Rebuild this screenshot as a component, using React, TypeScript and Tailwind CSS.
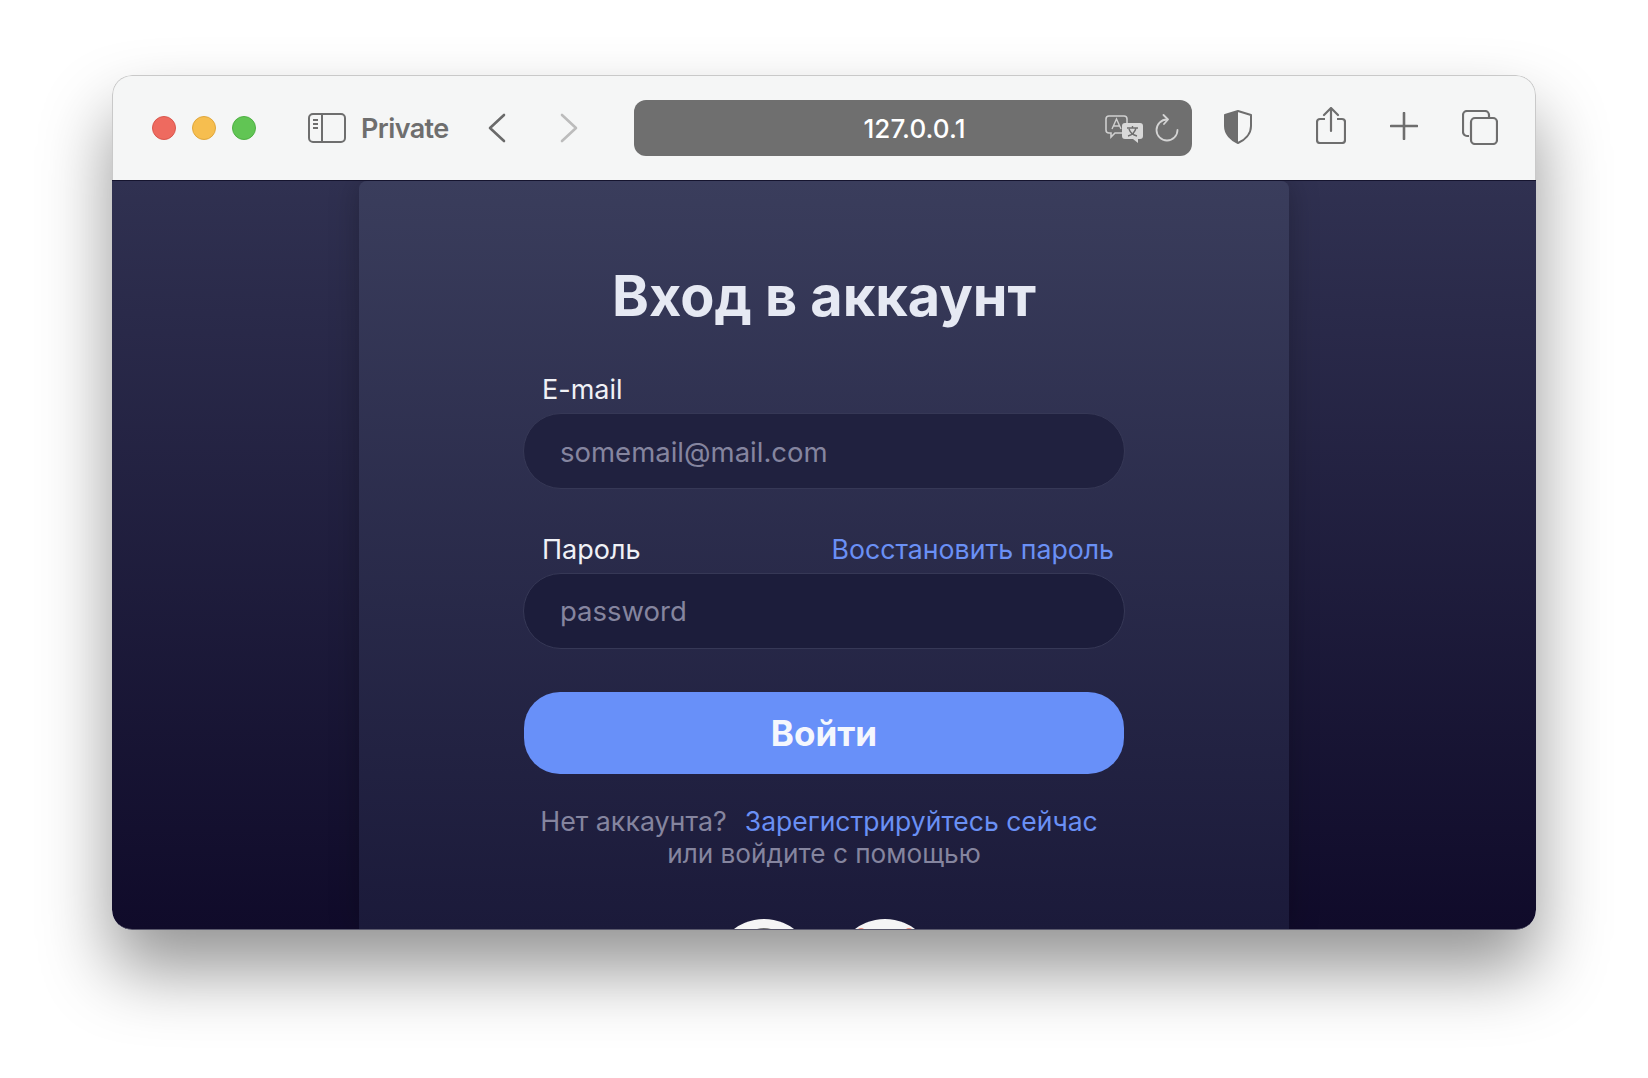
import React from 'react';

const font = "font-['Inter','Noto_Sans',sans-serif]";

const Icon = ({ className, children, vb }: { className: string; children: React.ReactNode; vb: string }) => (
  <svg className={className} viewBox={vb} fill="none">
    {children}
  </svg>
);

const TitleBar = () => (
  <div className="flex items-center h-[105px] bg-[#f5f6f6] pl-[39px] shrink-0 border-t border-x border-[#c9c9c9] rounded-t-[20px]">
    <div className="flex gap-4">
      <div className="w-6 h-6 rounded-full bg-[#ee6a5f] border border-[#d9574d]" />
      <div className="w-6 h-6 rounded-full bg-[#f6be4f] border border-[#e0a73c]" />
      <div className="w-6 h-6 rounded-full bg-[#61c554] border border-[#4fb044]" />
    </div>
    <Icon className="ml-[52px] w-[38px] h-[30px]" vb="0 0 38 30">
      <rect x="1" y="1" width="36" height="28" rx="4" stroke="#6e6e6e" strokeWidth="2" />
      <path d="M14 1v28" stroke="#6e6e6e" strokeWidth="2" />
      <path d="M5 7h5M5 11h5M5 15h5" stroke="#6e6e6e" strokeWidth="2" />
    </Icon>
    <span className="ml-[15px] w-[90px] text-[27px] font-semibold leading-none text-[#6e6e6e] font-['Inter',sans-serif] tracking-[-0.6px]">Private</span>
    <Icon className="ml-[37px] w-[18px] h-[30px]" vb="0 0 18 30">
      <path d="M16 2 2 15l14 13" stroke="#6a6a6a" strokeWidth="2.6" strokeLinecap="round" strokeLinejoin="round" />
    </Icon>
    <Icon className="ml-[54px] w-[18px] h-[30px]" vb="0 0 18 30">
      <path d="M2 2l14 13L2 28" stroke="#bcbcbc" strokeWidth="2.6" strokeLinecap="round" strokeLinejoin="round" />
    </Icon>
    <div className="relative ml-[56px] w-[558px] h-[56px] rounded-[12px] bg-[#6f6f6f] flex items-center justify-center">
      <span className="ml-[3px] text-[26px] font-medium text-white font-['Inter',sans-serif] tracking-[0.1px]">127.0.0.1</span>
      <Icon className="absolute left-[471px] top-[15px] w-[38px] h-[28px]" vb="0 0 38 28">
        <path d="M4 1h15a3 3 0 0 1 3 3v11a3 3 0 0 1-3 3H10l-4 4v-4H4a3 3 0 0 1-3-3V4a3 3 0 0 1 3-3Z" stroke="#cfcfcf" strokeWidth="1.6" />
        <path d="M7 14l4.500-10L16 14M8.500 11h6" stroke="#cfcfcf" strokeWidth="1.4" />
        <path d="M20 8h15a3 3 0 0 1 3 3v10a3 3 0 0 1-3 3h-2v4l-5-4h-8a3 3 0 0 1-3-3V11a3 3 0 0 1 3-3Z" fill="#d8d8d8" />
        <path d="M22 13h11M27.500 11v2M31 13c-1 4-4 7-8 8M24 14c1 3 4 6 8 7" stroke="#6f6f6f" strokeWidth="1.400" />
      </Icon>
      <Icon className="absolute left-[521px] top-[14px] w-[24px] h-[28px]" vb="0 0 24 28">
        <path d="M12 5.500a10.500 10.500 0 1 0 10.500 10.500" stroke="#d4d4d4" strokeWidth="1.800" strokeLinecap="round" />
        <path d="M8.500 1 13 5.500 9 10" stroke="#d4d4d4" strokeWidth="1.800" strokeLinecap="round" strokeLinejoin="round" />
      </Icon>
    </div>
    <Icon className="ml-[32px] w-[28px] h-[34px] -translate-y-px" vb="0 0 28 34">
      <path d="M14 1 1 5v11c0 8 6 14 13 17 7-3 13-9 13-17V5Z" stroke="#6e6e6e" strokeWidth="2" strokeLinejoin="round" />
      <path d="M14 1 1 5v11c0 8 6 14 13 17Z" fill="#6e6e6e" />
    </Icon>
    <Icon className="ml-[64px] w-[30px] h-[37px] -translate-y-[3px]" vb="0 0 30 37">
      <path d="M9 12H4a3 3 0 0 0-3 3v18a3 3 0 0 0 3 3h22a3 3 0 0 0 3-3V15a3 3 0 0 0-3-3h-5" stroke="#6e6e6e" strokeWidth="2.200" />
      <path d="M15 24V2M8 8l7-7 7 7" stroke="#6e6e6e" strokeWidth="2.200" strokeLinecap="round" strokeLinejoin="round" />
    </Icon>
    <Icon className="ml-[44px] w-[28px] h-[28px] -translate-y-[2px]" vb="0 0 28 28">
      <path d="M14 1v26M1 14h26" stroke="#6e6e6e" strokeWidth="2.600" strokeLinecap="round" />
    </Icon>
    <Icon className="ml-[44px] w-[36px] h-[35px] -translate-y-px" vb="0 0 36 35">
      <path d="M7 26H5a4 4 0 0 1-4-4V5a4 4 0 0 1 4-4h18a4 4 0 0 1 4 4v3" stroke="#6e6e6e" strokeWidth="2.200" />
      <rect x="9" y="8" width="26" height="26" rx="4" stroke="#6e6e6e" strokeWidth="2.200" />
    </Icon>
  </div>
);

const Field = ({ label, placeholder, link, box }: { label: string; placeholder: string; link?: string; box: string }) => (
  <div className="w-[602px] shrink-0">
    <div className="flex justify-between items-baseline pl-[19px] pr-[11px] text-[27px] leading-[32px]">
      <span className="text-[#f0f1f6]">{label}</span>
      {link && <a className="text-[26.7px] text-[#6a90f5]">{link}</a>}
    </div>
    <div className={`rounded-[38px] flex items-center pl-[36px] text-[27.5px] text-[#85859f] border border-[#363856] ${box}`}>
      {placeholder}
    </div>
  </div>
);

export default function App() {
  return (
    <div className={`w-[1648px] h-[1078px] overflow-hidden bg-white pl-[112px] pt-[75px] ${font}`}>
      <div className="w-[1424px] h-[855px] rounded-[20px] overflow-hidden flex flex-col shadow-[0_40px_70px_rgba(0,0,0,0.42)]">
        <TitleBar />
        <div className="flex-1 min-h-0 flex justify-center overflow-hidden border-t border-[#15142e] border-b border-b-[#5a596c] rounded-b-[20px] bg-gradient-to-b from-[#303151] to-[#100b2a]">
          <div className="w-[930px] flex flex-col items-center bg-gradient-to-b from-[#3a3d5c] to-[#1b1a3a] rounded-t-[8px] shadow-[0_0_30px_rgba(0,0,0,0.25)]">
            <h1 className="shrink-0 mt-[79px] text-[55.8px] leading-[72px] font-bold text-[#e6e9f3]">Вход в аккаунт</h1>
            <div className="shrink-0 mt-[42px]">
              <Field label="E-mail" placeholder="somemail@mail.com" box="mt-[7px] h-[76px] pt-[4px] bg-[#20213f]" />
            </div>
            <div className="shrink-0 mt-[44px]">
              <Field label="Пароль" placeholder="password" link="Восстановить пароль" box="mt-[7px] h-[76px] pt-[2px] bg-[#1c1d3b]" />
            </div>
            <button className="shrink-0 mt-[43px] w-[600px] h-[82px] rounded-[36px] bg-[#6890f9] text-[35px] font-bold text-[#f5f7fd]">Войти</button>
            <p className="shrink-0 mt-[31px] text-[26.8px] leading-[32px] text-center text-[#85859f]">
              Нет аккаунта?&nbsp; <a className="ml-[3px] pr-[10px] text-[26.5px] text-[#6a90f5]">Зарегистрируйтесь сейчас</a>
              <br />
              <span className="text-[26.2px]">или войдите с помощью</span>
            </p>
            <div className="shrink-0 mt-[49px] flex gap-[21px]">
              <div className="relative w-[100px] h-[100px] rounded-full bg-[#f5f5f5]">
                <div className="absolute left-[25px] top-[9px] w-[50px] h-[50px] rounded-full bg-[#6d6d6d]" />
              </div>
              <div className="relative w-[100px] h-[100px] rounded-full bg-[#f5f5f5]">
                <div className="absolute left-[22px] top-[9px] w-[8px] h-[8px] rounded-full bg-[#ea8a7c]" />
                <div className="absolute left-[70px] top-[9px] w-[8px] h-[8px] rounded-full bg-[#ea8a7c]" />
              </div>
            </div>
          </div>
        </div>
      </div>
    </div>
  );
}
